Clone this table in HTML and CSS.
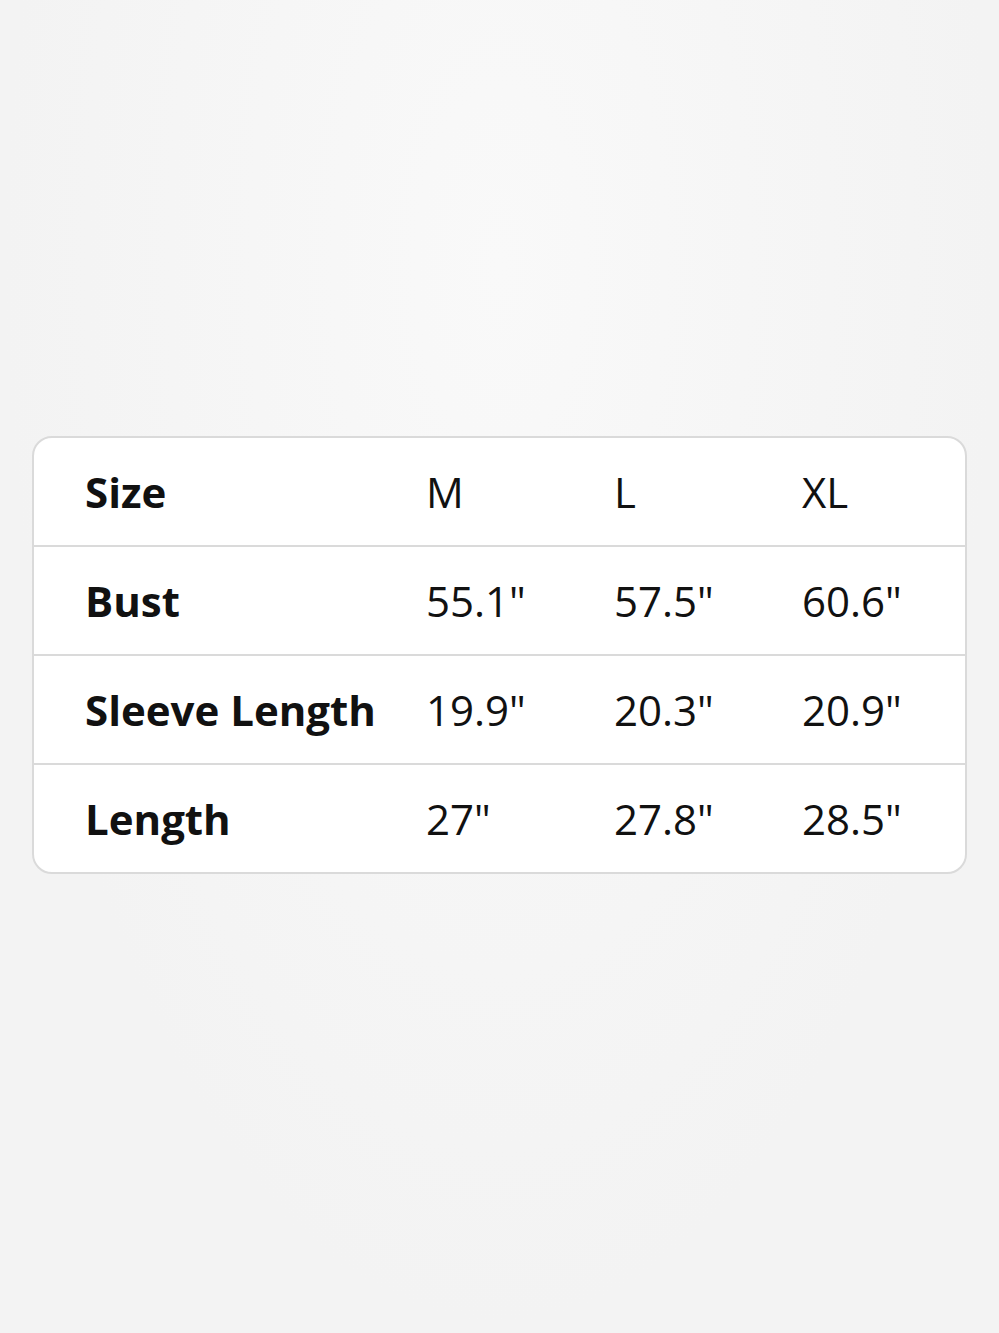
FILE: index.html
```html
<!DOCTYPE html>
<html lang="en">
<head>
  <meta charset="UTF-8">
  <title>Size Chart</title>
  <link rel="stylesheet" href="styles.css">
</head>
<body>

  <!-- Size chart card -->
  <main class="chart">
    <div class="row">
      <span class="label">Size</span>
      <span>M</span>
      <span>L</span>
      <span>XL</span>
    </div>
    <div class="row">
      <span class="label">Bust</span>
      <span>55.1"</span>
      <span>57.5"</span>
      <span>60.6"</span>
    </div>
    <div class="row">
      <span class="label">Sleeve Length</span>
      <span>19.9"</span>
      <span>20.3"</span>
      <span>20.9"</span>
    </div>
    <div class="row">
      <span class="label">Length</span>
      <span>27"</span>
      <span>27.8"</span>
      <span>28.5"</span>
    </div>
  </main>

</body>
</html>
```

FILE: styles.css
```css
/* Global Styles */
body {
  margin: 0;
  padding: 436px 32px 0 32px;
  height: 1333px;
  box-sizing: border-box;
  background: radial-gradient(ellipse at 50% 20%, #f9f9f9, #f3f3f3 70%);
  font-family: 'Open Sans', 'Noto Sans', sans-serif;
  color: #111;
}

.chart {
  background: #fff;
  border: 2px solid #dadada;
  border-radius: 20px;
  overflow: hidden;
}

.row {
  display: grid;
  grid-template-columns: 341px 188px 188px 1fr;
  align-items: center;
  height: 107px;
  padding-left: 51px;
  font-size: 42px;
  border-top: 2px solid #dadada;
}

.row:first-child {
  border-top: none;
}

.label {
  font-weight: 700;
}
```
